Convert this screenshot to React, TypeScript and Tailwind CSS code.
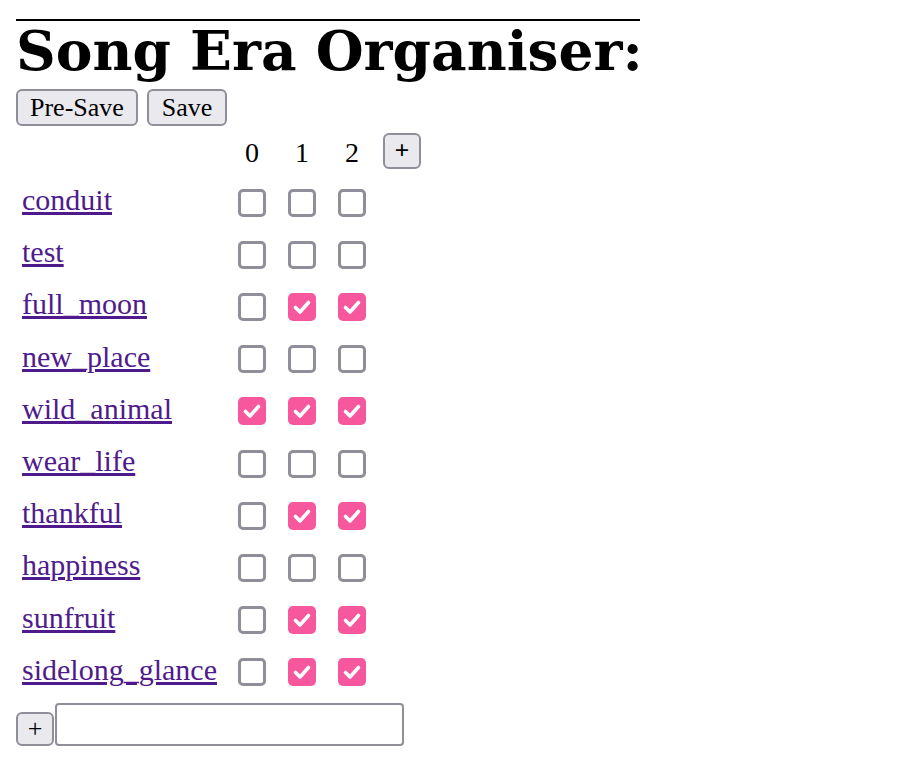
const SONGS: { name: string; eras: boolean[] }[] = [
  { name: "conduit", eras: [false, false, false] },
  { name: "test", eras: [false, false, false] },
  { name: "full_moon", eras: [false, true, true] },
  { name: "new_place", eras: [false, false, false] },
  { name: "wild_animal", eras: [true, true, true] },
  { name: "wear_life", eras: [false, false, false] },
  { name: "thankful", eras: [false, true, true] },
  { name: "happiness", eras: [false, false, false] },
  { name: "sunfruit", eras: [false, true, true] },
  { name: "sidelong_glance", eras: [false, true, true] },
]

function Box({ checked }: { checked: boolean }) {
  if (checked) {
    return (
      <span className="inline-flex w-[28px] h-[28px] items-center justify-center rounded-[5px] bg-[#f7579d]">
        <svg width="28" height="28" viewBox="0 0 28 28" fill="none">
          <path d="M7.5 14.5 L12 19 L20.5 9.5" stroke="white" strokeWidth="3.6" strokeLinecap="round" strokeLinejoin="round" />
        </svg>
      </span>
    )
  }
  return <span className="inline-block w-[28px] h-[28px] rounded-[5px] border-[3px] border-[#8f8e99] bg-white" />
}

const btn = "bg-[#e9e9ee] border-2 border-[#8f8e99] rounded-[6px] text-black leading-none"

export default function App() {
  return (
    <div className="px-4 pt-[19px] font-['Liberation_Serif',serif] text-black bg-white min-h-screen">
      <hr className="w-[624px] border-t-2 border-black" />
      <h1 className="font-['DejaVu_Serif',serif] font-bold text-[55px] leading-[60px] whitespace-nowrap">
        Song Era Organiser:
      </h1>

      {/* save buttons */}
      <div className="flex gap-[9px] mt-[8px]">
        <button className={`${btn} h-[37px] px-[12px] text-[26px]`}>Pre-Save</button>
        <button className={`${btn} h-[37px] px-[13px] text-[26px]`}>Save</button>
      </div>

      <table className="border-separate border-spacing-0 mt-[4px]">
        <thead>
          <tr className="h-[45px]">
            <th className="w-[211px]" />
            {[0, 1, 2].map((n) => (
              <th key={n} className="w-[50px] text-center font-normal text-[28px] align-middle">
                {n}
              </th>
            ))}
            <th className="pl-[6px] align-middle">
              <button className={`${btn} w-[38px] h-[36px] text-[26px] -mt-[4px]`}>+</button>
            </th>
          </tr>
        </thead>
        <tbody>
          {SONGS.map((song) => (
            <tr key={song.name} className="h-[52.2px]">
              <td className="pl-[6px] align-middle whitespace-nowrap">
                <a href="#" className="text-[#4f1b8c] underline text-[30px] leading-none">
                  {song.name}
                </a>
              </td>
              {song.eras.map((on, i) => (
                <td key={i} className="text-center align-middle">
                  <span className="inline-flex align-middle mt-[3px]">
                    <Box checked={on} />
                  </span>
                </td>
              ))}
              <td />
            </tr>
          ))}
        </tbody>
      </table>

      {/* add song */}
      <div className="flex items-end mt-[6px]">
        <button className={`${btn} w-[38px] h-[34px] text-[26px]`}>+</button>
        <input className="ml-px w-[349px] h-[43px] border-2 border-[#8f8e99] rounded-[4px] bg-white" />
      </div>
    </div>
  )
}
